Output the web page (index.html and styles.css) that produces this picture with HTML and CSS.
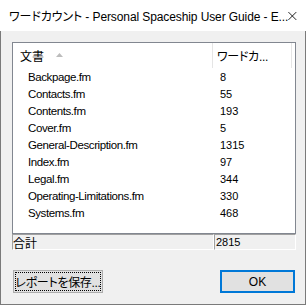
FILE: index.html
```html
<!DOCTYPE html>
<html lang="ja">
<head>
    <meta charset="UTF-8">
    <title>ワードカウント</title>
    <link rel="stylesheet" href="styles.css">
</head>
<body>

<div class="window">
    <div class="titlebar">
        <span class="title">ワードカウント - Personal Spaceship User Guide - E...</span>
        <svg class="close-icon" width="10" height="10" viewBox="0 0 10 10">
            <path d="M0.5 0.5 L9.5 9.5 M9.5 0.5 L0.5 9.5" stroke="#000" stroke-width="1" fill="none"/>
        </svg>
    </div>

    <div class="client">
        <div class="listbox">
            <div class="list-head">
                <div class="head-name">
                    文書
                    <svg class="sort-arrow" width="7" height="4" viewBox="0 0 7 4">
                        <polygon points="0,4 3.5,0 7,4" fill="#bcbcbc"/>
                    </svg>
                </div>
                <div class="head-count">ワードカ...</div>
            </div>
            <div class="row"><span class="name">Backpage.fm</span><span class="count">8</span></div>
            <div class="row"><span class="name">Contacts.fm</span><span class="count">55</span></div>
            <div class="row"><span class="name">Contents.fm</span><span class="count">193</span></div>
            <div class="row"><span class="name">Cover.fm</span><span class="count">5</span></div>
            <div class="row"><span class="name">General-Description.fm</span><span class="count">1315</span></div>
            <div class="row"><span class="name">Index.fm</span><span class="count">97</span></div>
            <div class="row"><span class="name">Legal.fm</span><span class="count">344</span></div>
            <div class="row"><span class="name">Operating-Limitations.fm</span><span class="count">330</span></div>
            <div class="row"><span class="name">Systems.fm</span><span class="count">468</span></div>
        </div>

        <div class="total">
            <div class="total-cell total-label">合計</div>
            <div class="total-cell total-value">2815</div>
        </div>

        <div class="buttons">
            <button class="btn btn-focus">レポートを保存...</button>
            <button class="btn btn-default">OK</button>
        </div>
    </div>
</div>

</body>
</html>
```

FILE: styles.css
```css
body {
    margin: 0;
    background: #ffffff;
    font-family: "Liberation Sans", "Noto Sans CJK JP", sans-serif;
    font-feature-settings: "palt";
    color: #000;
}

.window {
    width: 306px;
    height: 305px;
    display: flex;
    flex-direction: column;
}

.titlebar {
    height: 31px;
    background: #ffffff;
    display: flex;
    align-items: center;
    padding-left: 9px;
    flex-shrink: 0;
}

.title {
    font-size: 12px;
    letter-spacing: -0.1px;
    white-space: nowrap;
}

.close-icon {
    margin-left: auto;
    margin-right: 9px;
}

.client {
    flex: 1;
    background: #f0f0f0;
    border: 1px solid #7a7a7a;
    border-top: none;
    padding: 11px 0 0 11px;
}

.listbox {
    width: 284px;
    height: 192px;
    box-sizing: border-box;
    border: 1px solid #828790;
    background: #ffffff;
}

.list-head {
    display: flex;
    height: 25px;
    font-size: 12px;
}

.head-name {
    width: 200px;
    border-right: 1px solid #e5e5e5;
    display: flex;
    align-items: center;
    padding-left: 7px;
    box-sizing: border-box;
}

.sort-arrow {
    margin-left: 12px;
    margin-top: -2px;
}

.head-count {
    width: 79px;
    border-right: 1px solid #e5e5e5;
    display: flex;
    align-items: center;
    padding-left: 4px;
    box-sizing: border-box;
    white-space: nowrap;
    letter-spacing: -0.3px;
}

.row {
    display: grid;
    grid-template-columns: 201px 1fr;
    height: 17px;
    align-items: center;
    font-size: 11.5px;
    letter-spacing: -0.4px;
}

.row .name {
    padding-left: 15px;
}

.row .count {
    padding-left: 6px;
    letter-spacing: 0;
    font-size: 11px;
}

.total {
    display: flex;
    width: 284px;
    height: 16px;
}

.total-cell {
    box-sizing: border-box;
    border-top: 1px solid #a0a0a0;
    border-left: 1px solid #a0a0a0;
    border-right: 1px solid #ffffff;
    border-bottom: 1px solid #ffffff;
    display: flex;
    align-items: center;
}

.total-label {
    width: 202px;
    font-size: 12px;
}

.total-value {
    width: 82px;
    font-size: 11px;
    padding-left: 1px;
}

.buttons {
    display: flex;
    justify-content: space-between;
    width: 283px;
    margin-top: 20px;
}

.btn {
    height: 23px;
    background: #e1e1e1;
    font-family: "Liberation Sans", "Noto Sans CJK JP", sans-serif;
    font-feature-settings: "palt";
    font-size: 12px;
    color: #000;
    padding: 0;
    margin: 0;
    white-space: nowrap;
}

.btn-focus {
    width: 90px;
    margin-left: 1px;
    border: 1px solid #adadad;
    outline: 1px dotted #000;
    outline-offset: -3px;
    letter-spacing: -0.3px;
}

.btn-default {
    width: 75px;
    border: 2px solid #0078d7;
}
```
